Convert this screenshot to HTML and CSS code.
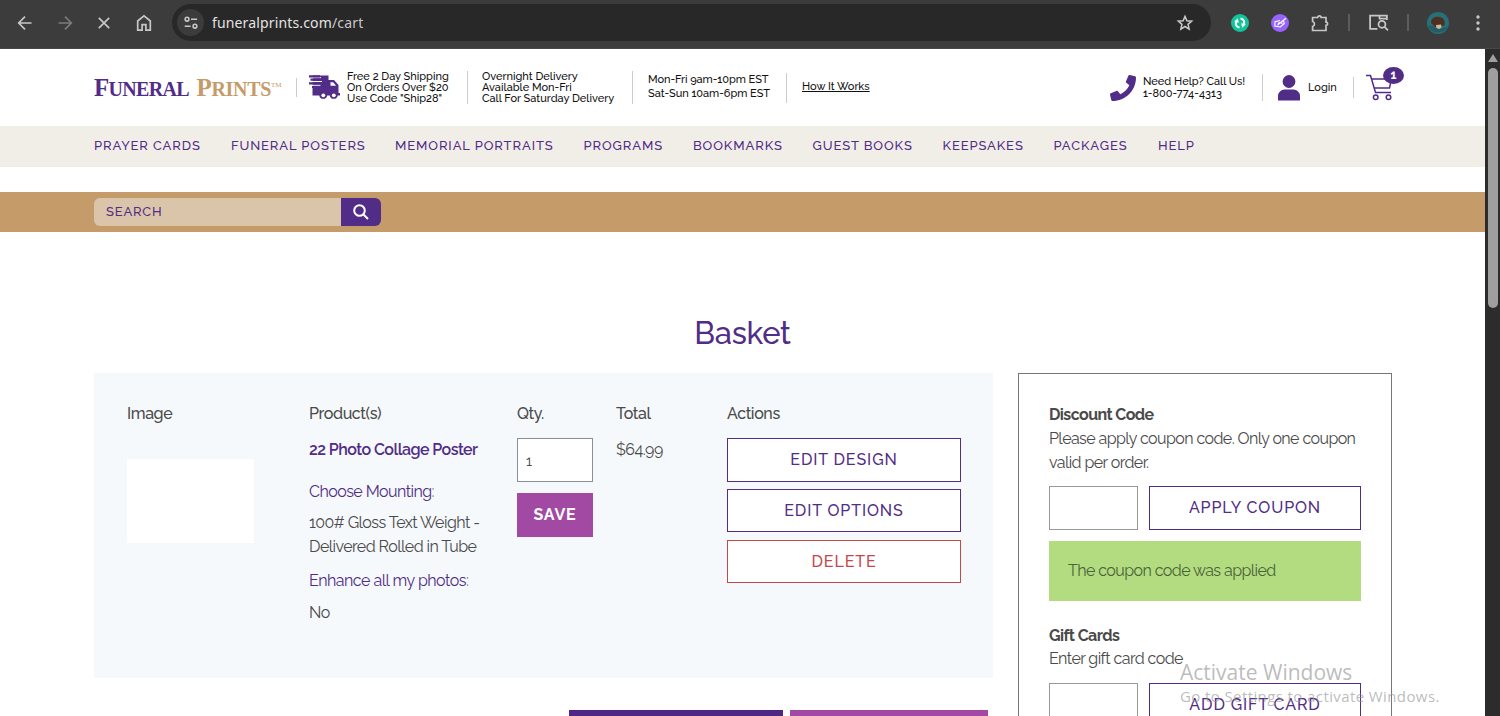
FILE: index.html
```html
<!DOCTYPE html>
<html lang="en">
<head>
    <meta charset="UTF-8">
    <title>Basket - Funeral Prints</title>
    <link rel="stylesheet" href="styles.css">
</head>
<body>

    <!-- Browser toolbar -->
    <div class="toolbar">
        <svg class="tool-icon" viewBox="0 0 20 20"><path d="M16.5 10H4M10 3.7L3.7 10l6.3 6.3"/></svg>
        <svg class="tool-icon dim" viewBox="0 0 20 20"><path d="M3.5 10H16M10 3.7l6.3 6.3-6.3 6.3"/></svg>
        <svg class="tool-icon" viewBox="0 0 20 20"><path d="M4.8 4.8l10.4 10.4M15.2 4.8L4.8 15.2"/></svg>
        <svg class="tool-icon" viewBox="0 0 20 20"><path d="M3.7 17.2V8L10 2.9 16.3 8v9.2h-4.4v-5.6H8.1v5.6z"/></svg>
        <div class="address-bar">
            <div class="site-info">
                <svg viewBox="0 0 20 20"><circle cx="5.6" cy="5.8" r="2.1"/><path d="M10 5.8h6.8M3 13.6h6.6"/><circle cx="14.4" cy="13.6" r="2.1"/></svg>
            </div>
            <span class="url">funeralprints.com<span class="url-path">/cart</span></span>
            <svg class="star" viewBox="0 0 20 20"><path d="M10 2.6l2.1 4.9 5.3.5-4 3.5 1.2 5.2L10 13.9l-4.6 2.8 1.2-5.2-4-3.5 5.3-.5z"/></svg>
        </div>
        <div class="extensions">
            <svg class="ext" viewBox="0 0 18 18"><circle cx="9" cy="9" r="9" fill="#15c39a"/><path d="M8.500 13.500C5 13 4 10 5.500 7M9.500 4.500C13 5 14 8 12.500 11" fill="none" stroke="#fff" stroke-width="2"/><path d="M3.200 7.800L6.800 4.200l1 4.600zM14.800 10.200l-3.600 3.600-1-4.600z" fill="#fff"/></svg>
            <svg class="ext" viewBox="0 0 18 18"><circle cx="9" cy="9" r="9" fill="#9664fb"/><path d="M9 6.500L4 7.800 3.800 12l5.500 1 4-3.500-.8-2.500M6.500 11L15 4.200M6.800 9.200l2.200-.7 2.500 1" fill="none" stroke="#fff" stroke-width="1.1"/></svg>
            <svg class="puzzle" viewBox="0 0 20 20"><path d="M2.600 4.500h5.100a1.700 1.700 0 0 1 3.400 0h4.900v4.700a1.600 1.600 0 0 1 0 3.200v5.100H2.600v-4a2.600 2.600 0 0 0 0-5z"/></svg>
            <span class="tool-sep"></span>
            <svg class="panel" viewBox="0 0 20 20"><path d="M9 16H2V3.5h16v4M11 3.5v2.800h7"/><circle cx="13.300" cy="11.700" r="3.300"/><path d="M15.800 14.200l3.200 3.200"/></svg>
            <span class="tool-sep"></span>
            <svg class="avatar" viewBox="0 0 22 22"><circle cx="11" cy="11" r="11" fill="#287078"/><path d="M1 14Q6 12 10 17l7-1 4-2a11 11 0 0 1-20 0z" fill="#225c65"/><path d="M4 11C4 6 8 4 12 5c5 0 7 5 5 9l-4-1-5 2z" fill="#4d3022"/><path d="M9 13l5-.5.5 3-2 1.500-3-1z" fill="#d7b298"/></svg>
            <svg class="dots" viewBox="0 0 4 16"><circle cx="2" cy="2" r="1.700"/><circle cx="2" cy="8" r="1.700"/><circle cx="2" cy="14" r="1.700"/></svg>
        </div>
    </div>

    <div class="viewport">
        <div class="page">
            <!-- Header -->
            <header class="header">
                <div class="logo">F<small>UNERAL</small> <span class="logo-gold">P<small>RINTS</small></span><sup>TM</sup></div>
                <div class="ship">
                    <svg class="truck" viewBox="0 0 31 25"><path fill="#522d87" d="M4 .5h15.500v4.500h5.500l4.500 5v8h1.500v2.500h-2.300a4 4 0 0 1-7.900 0h-2.600a4 4 0 0 1-7.900 0H3.500v-7z"/><path stroke="#fff" stroke-width="1.100" d="M0 2.800h12M1 6.500h12M0 10.200h11.500"/><path stroke="#522d87" stroke-width="2.200" d="M0 1.300h11M1.500 4.700h10.500M0 8.400h12M3 12h10"/><path fill="#fff" d="M21.500 7.200h2.600l3 3.600h-5.600z"/><circle cx="14.300" cy="20.300" r="1.900" fill="#fff"/><circle cx="24.800" cy="20.300" r="1.900" fill="#fff"/></svg>
                    <p class="tiny ship-text">Free 2 Day Shipping<br>On Orders Over $20<br>Use Code "Ship28"</p>
                </div>
                <div class="overnight"><p class="tiny">Overnight Delivery<br>Available Mon-Fri<br>Call For Saturday Delivery</p></div>
                <div class="hours"><p class="tiny">Mon-Fri 9am-10pm EST<br>Sat-Sun 10am-6pm EST</p></div>
                <div class="how"><a class="tiny" href="#">How It Works</a></div>
                <div class="phone">
                    <svg viewBox="0 0 512 512"><path fill="#522d87" d="M493.400 24.600l-104-24c-11.300-2.600-22.900 3.300-27.500 13.900l-48 112c-4.200 9.800-1.400 21.300 6.900 28l60.600 49.600c-36 76.700-98.900 140.500-177.200 177.200l-49.600-60.600c-6.800-8.300-18.200-11.100-28-6.900l-112 48C3.900 366.500-2 378.100.6 389.400l24 104C27.100 504.200 36.700 512 48 512c256.100 0 464-207.500 464-464 0-11.200-7.700-20.900-18.600-23.400z"/></svg>
                    <p class="tiny">Need Help? Call Us!<br>1-800-774-4313</p>
                </div>
                <div class="login">
                    <svg viewBox="0 0 22 26"><circle cx="11" cy="6.500" r="6.400" fill="#522d87"/><path d="M0 25.500v-4.500a6.500 6.500 0 0 1 6.500-6.500h9a6.500 6.500 0 0 1 6.500 6.500v4.500z" fill="#522d87"/></svg>
                    <span>Login</span>
                </div>
                <div class="basket">
                    <svg viewBox="0 0 28 27"><path d="M0 1.500h4.500L9.500 18.500H25M6 5h19.500L23.500 14H8.500"/><circle cx="9.700" cy="23.200" r="2.300"/><circle cx="22.500" cy="23.200" r="2.300"/></svg>
                    <span class="badge">1</span>
                </div>
            </header>

            <nav class="nav">
                <a>PRAYER CARDS</a>
                <a>FUNERAL POSTERS</a>
                <a>MEMORIAL PORTRAITS</a>
                <a>PROGRAMS</a>
                <a>BOOKMARKS</a>
                <a>GUEST BOOKS</a>
                <a>KEEPSAKES</a>
                <a>PACKAGES</a>
                <a>HELP</a>
            </nav>

            <!-- Search -->
            <div class="search-band">
                <div class="search-field">SEARCH</div>
                <div class="search-button">
                    <svg viewBox="0 0 16 16"><circle cx="6.500" cy="6.500" r="5.300"/><path d="M10.500 10.500L15 15"/></svg>
                </div>
            </div>

            <h1 class="title">Basket</h1>

            <main class="content">
                <div class="left">
                    <section class="cart">
                        <div>
                            <h3 class="col-title">Image</h3>
                            <div class="thumb"></div>
                        </div>
                        <div>
                            <h3 class="col-title">Product(s)</h3>
                            <p class="product-name">22 Photo Collage Poster</p>
                            <p class="option">Choose Mounting<span class="colon">:</span></p>
                            <p class="value value-first">100# Gloss Text Weight -<br>Delivered Rolled in Tube</p>
                            <p class="option enhance">Enhance all my photos<span class="colon">:</span></p>
                            <p class="value">No</p>
                        </div>
                        <div>
                            <h3 class="col-title">Qty.</h3>
                            <div class="qty">1</div>
                            <div class="save">SAVE</div>
                        </div>
                        <div>
                            <h3 class="col-title">Total</h3>
                            <p class="price">$64.99</p>
                        </div>
                        <div>
                            <h3 class="col-title">Actions</h3>
                            <div class="actions">
                                <div class="button">EDIT DESIGN</div>
                                <div class="button">EDIT OPTIONS</div>
                                <div class="button delete">DELETE</div>
                            </div>
                        </div>
                    </section>
                    <div class="bottom-buttons">
                        <div class="continue"></div>
                        <div class="checkout"></div>
                    </div>
                </div>

                <aside class="summary">
                    <h4>Discount Code</h4>
                    <p class="coupon-text">Please apply coupon code. Only one coupon<br>valid per order.</p>
                    <div class="form-row">
                        <div class="input"></div>
                        <div class="button">APPLY COUPON</div>
                    </div>
                    <div class="notice">The coupon code was applied</div>
                    <h4 class="gift-title">Gift Cards</h4>
                    <p class="gift-text">Enter gift card code</p>
                    <div class="form-row gift-row">
                        <div class="input"></div>
                        <div class="button">ADD GIFT CARD</div>
                    </div>
                </aside>
            </main>
        </div>
        <div class="scrollbar">
            <div class="scroll-arrow"></div>
            <div class="scroll-thumb"></div>
        </div>
    </div>

    <!-- Windows watermark -->
    <div class="watermark">
        <div class="watermark-title">Activate Windows</div>
        <div class="watermark-text">Go to Settings to activate Windows.</div>
    </div>

</body>
</html>
```
FILE: styles.css
```css
* {
    box-sizing: border-box;
}

body {
    margin: 0;
    height: 716px;
    overflow: hidden;
    background: #fff;
    color: #4a4a4a;
    font-family: Raleway, Lato, sans-serif;
    font-size: 16px;
}

h1, h3, h4, p {
    margin: 0;
}

/* Browser toolbar */
.toolbar {
    display: flex;
    align-items: center;
    height: 49px;
    padding: 0 0 3px 15px;
    background: #3c3c3c;
    border-bottom: 1px solid #474747;
}

.toolbar svg {
    fill: none;
    stroke: #c7c7c7;
    stroke-width: 1.7;
}

.tool-icon {
    width: 20px;
    height: 20px;
    margin-right: 19.5px;
}

.toolbar .dim {
    stroke: #7b7b7b;
}

.address-bar {
    display: flex;
    align-items: center;
    width: 1039px;
    height: 37px;
    margin-left: -1px;
    padding: 0 17px 0 5px;
    border-radius: 19px;
    background: #282828;
}

.site-info {
    display: flex;
    align-items: center;
    justify-content: center;
    width: 27px;
    height: 27px;
    border-radius: 50%;
    background: #3c3c3c;
}

.site-info svg {
    width: 18px;
    height: 18px;
}

.url {
    flex: 1;
    margin-left: 8px;
    color: #e3e3e3;
    font-family: "Noto Sans", sans-serif;
    font-size: 14px;
    letter-spacing: 0.15px;
}

.url-path {
    color: #c7c7c7;
}

.star {
    width: 18px;
    height: 18px;
}

.extensions {
    display: flex;
    align-items: center;
    margin-left: 20px;
}

.extensions .ext {
    width: 18px;
    height: 18px;
    margin-right: 21.5px;
    stroke: none;
}

.puzzle {
    width: 20px;
    height: 20px;
    margin-right: 18px;
}

.tool-sep {
    width: 2px;
    height: 17px;
    background: #5c5c5c;
}

.panel {
    width: 21px;
    height: 21px;
    margin: 0 18px;
}

.extensions .avatar {
    width: 22px;
    height: 22px;
    margin: 0 27px 0 18px;
    stroke: none;
}

.extensions .dots {
    width: 4px;
    height: 16px;
    fill: #c7c7c7;
    stroke: none;
}

/* Page frame */
.viewport {
    display: flex;
    height: 667px;
}

.page {
    width: 1485px;
    overflow: hidden;
}

.scrollbar {
    display: flex;
    flex-direction: column;
    align-items: center;
    width: 15px;
    padding-top: 5px;
    background: #2c2c2c;
}

.scroll-arrow {
    border-left: 5px solid transparent;
    border-right: 5px solid transparent;
    border-bottom: 8px solid #9f9f9f;
}

.scroll-thumb {
    width: 10px;
    height: 240px;
    margin-top: 6px;
    border-radius: 5px;
    background: #9f9f9f;
}

/* Header */
.header {
    display: flex;
    align-items: center;
    height: 77px;
    padding-left: 94px;
    color: #111;
}

.logo {
    width: 202px;
    color: #522d87;
    font-family: "Liberation Serif", serif;
    font-size: 25px;
    font-weight: bold;
    letter-spacing: -0.7px;
    line-height: 24px;
    padding-bottom: 2px;
    white-space: nowrap;
    word-spacing: 2px;
}

.logo small {
    font-size: 20px;
}

.logo-gold {
    color: #c59b6a;
    letter-spacing: -0.3px;
}

.logo sup {
    color: #c59b6a;
    font-size: 7px;
    font-weight: normal;
    letter-spacing: 0;
    vertical-align: 9px;
}

.tiny {
    color: #111;
    font-size: 11px;
    font-weight: 500;
    line-height: 11px;
    white-space: nowrap;
}

.ship {
    display: flex;
    align-items: center;
    width: 171px;
    height: 19px;
    padding-left: 12px;
    border-left: 1px solid #ccc;
}

.truck {
    width: 31px;
    height: 25px;
    margin-right: 7px;
}

.overnight, .hours, .how, .login, .basket {
    display: flex;
    align-items: center;
    height: 33px;
    padding-left: 15px;
    border-left: 1px solid #ccc;
}

.overnight {
    width: 165px;
    padding-left: 14px;
}

.hours {
    width: 154px;
}

.hours .tiny {
    padding-bottom: 1px;
    letter-spacing: -0.05px;
    line-height: 14px;
}

.how {
    width: 324px;
    height: 30px;
    padding-bottom: 2px;
}

.phone {
    display: flex;
    align-items: center;
    width: 152px;
}

.phone svg {
    width: 26px;
    height: 26px;
    margin-right: 7px;
}

.phone .tiny {
    line-height: 12px;
}

.login {
    width: 91px;
    height: 27px;
}

.login svg {
    width: 22px;
    height: 26px;
    margin-right: 8px;
}

.login span {
    font-size: 11px;
    font-weight: 500;
}

.basket {
    position: relative;
    height: 21px;
    padding-left: 12px;
}

.basket svg {
    width: 28px;
    height: 27px;
    fill: none;
    stroke: #522d87;
    stroke-width: 1.5;
}

.badge {
    position: absolute;
    left: 29px;
    top: -10px;
    width: 21px;
    height: 17px;
    border-radius: 50%;
    background: #522d87;
    color: #fff;
    font-size: 12px;
    font-weight: bold;
    line-height: 16px;
    text-align: center;
}

/* Navigation */
.nav {
    display: grid;
    grid-template-columns: 137px 164px 188.5px 109.5px 119.5px 130px 111px 104.5px auto;
    height: 41px;
    padding: 0 0 3px 94px;
    background: #f1eee7;
    color: #522d87;
    font-size: 13px;
    font-weight: 500;
    letter-spacing: 0.9px;
    line-height: 39px;
}

/* Search */
.search-band {
    display: flex;
    height: 40px;
    margin-top: 25px;
    padding: 6px 0 6px 94px;
    background: #c59b6a;
}

.search-field {
    width: 247px;
    padding-left: 12px;
    border-radius: 6px 0 0 6px;
    background: #dac5ab;
    color: #522d87;
    font-size: 13px;
    font-weight: 500;
    letter-spacing: 0.8px;
    line-height: 27px;
}

.search-button {
    display: flex;
    align-items: center;
    justify-content: center;
    width: 40px;
    border-radius: 0 6px 6px 0;
    background: #522d87;
}

.search-button svg {
    width: 16px;
    height: 16px;
    fill: none;
    stroke: #fff;
    stroke-width: 2;
}

.title {
    margin-top: 81px;
    color: #522d87;
    font-size: 31px;
    font-weight: 500;
    letter-spacing: -0.3px;
    line-height: 40px;
    text-align: center;
}

/* Cart */
.content {
    display: flex;
    margin-top: 20px;
    padding-left: 94px;
}

.left {
    width: 924px;
}

.cart {
    display: grid;
    grid-template-columns: 182px 208px 99px 111px 234px;
    width: 899px;
    height: 305px;
    padding: 29px 33px;
    background: #f5f9fc;
    letter-spacing: -0.55px;
}

.col-title {
    height: 36px;
    font-size: 16px;
    font-weight: 500;
    letter-spacing: -0.4px;
    line-height: 24px;
}

.thumb {
    width: 127px;
    height: 84px;
    margin-top: 21px;
    background: #fff;
}

.product-name {
    margin-bottom: 18px;
    color: #522d87;
    font-weight: 600;
    line-height: 24px;
}

.option {
    color: #522d87;
    line-height: 24px;
}

.colon {
    color: #777;
}

.value {
    line-height: 24px;
}

.value-first {
    margin: 7px 0 10px;
}

.enhance {
    margin-bottom: 8px;
    letter-spacing: -0.5px;
}

.price {
    line-height: 24px;
}

.qty {
    width: 76px;
    height: 44px;
    padding-left: 8px;
    border: 1px solid #8c8f91;
    background: #fff;
    font-size: 14px;
    line-height: 44px;
}

.save {
    width: 76px;
    height: 44px;
    margin-top: 11px;
    background: #a249a4;
    color: #fff;
    font-weight: bold;
    letter-spacing: 0.8px;
    line-height: 44px;
    text-align: center;
}

.actions {
    display: flex;
    flex-direction: column;
    gap: 7.4px;
}

.button {
    height: 43px;
    border: 1px solid #522d87;
    background: #fff;
    color: #522d87;
    font-weight: 500;
    letter-spacing: 0.9px;
    line-height: 41px;
    text-align: center;
}

.button:first-child {
    height: 44px;
}

.delete {
    border-color: #c4484b;
    color: #c4484b;
}

.bottom-buttons {
    display: flex;
    gap: 7.4px;
    margin-top: 32px;
    padding-left: 475px;
}

.continue {
    width: 214px;
    height: 44px;
    background: #4f2683;
}

.checkout {
    width: 198px;
    height: 44px;
    background: #a249a4;
}

/* Summary */
.summary {
    width: 374px;
    height: 500px;
    padding: 29px 30px;
    border: 1px solid #777;
    letter-spacing: -0.58px;
    line-height: 24px;
}

.summary h4 {
    font-size: 16px;
    font-weight: bold;
}

.summary p {
    white-space: nowrap;
}

.form-row {
    display: grid;
    grid-template-columns: 89px 212px;
    gap: 11px;
    margin-top: 11px;
}

.form-row .button {
    height: 44px;
    line-height: 42px;
}

.input {
    height: 44px;
    border: 1px solid #999;
}

.notice {
    height: 60px;
    margin: 11px 0 23px;
    padding-left: 19px;
    background: #b3dc80;
    color: #4b6339;
    line-height: 60px;
}

.gift-title {
    height: 23px;
}

.gift-row {
    margin-top: 12px;
}

/* Watermark */
.watermark {
    position: absolute;
    left: 1180px;
    top: 658px;
    color: rgba(150, 150, 150, 0.65);
    font-family: "Open Sans", sans-serif;
    white-space: nowrap;
}

.watermark-title {
    font-size: 21px;
    line-height: 28px;
}

.watermark-text {
    font-size: 15px;
    letter-spacing: 0.4px;
    line-height: 21px;
}
```
